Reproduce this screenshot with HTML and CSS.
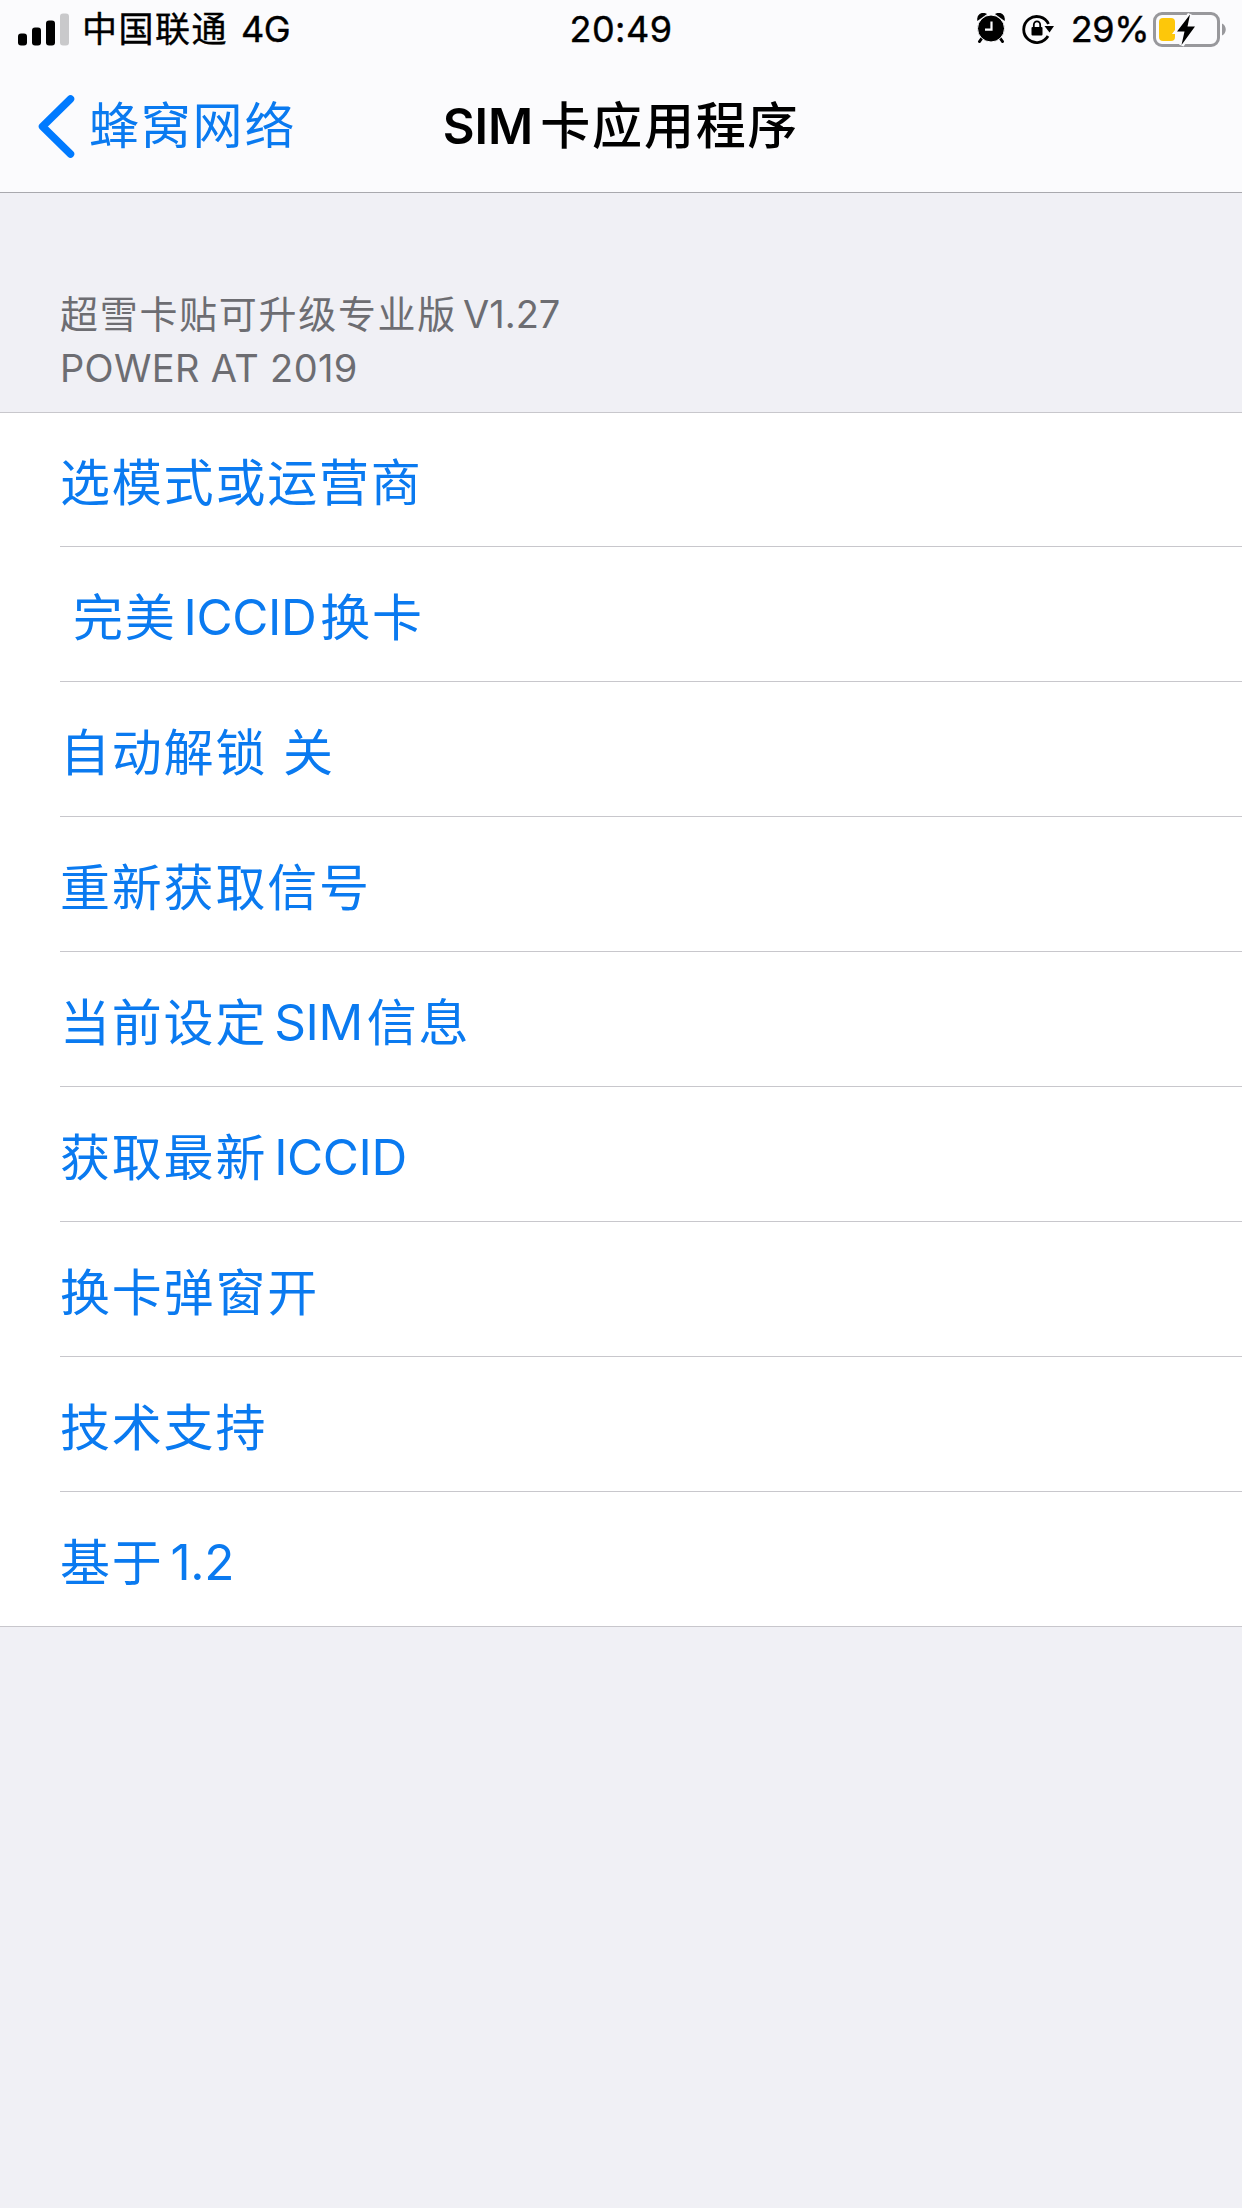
FILE: index.html
```
<!DOCTYPE html>
<html lang="zh-CN">
<head>
  <meta charset="UTF-8">
  <meta name="viewport" content="width=device-width, initial-scale=1.0">
  <title>SIM卡应用程序</title>
  <link rel="stylesheet" href="styles.css">
</head>
<body>

  <header class="top">
    <div class="status-bar">
      <div class="status-left">
        <svg class="signal" width="52" height="33" viewBox="0 0 52 33">
          <rect x="0" y="20.5" width="9" height="12" rx="3"/>
          <rect x="14" y="14.5" width="9" height="18" rx="3"/>
          <rect x="28" y="7.5" width="9" height="25" rx="3"/>
          <rect x="42" y="0.5" width="9" height="32" rx="3" fill="#c9c9cb"/>
        </svg>
        <span class="carrier">中国联通</span>
        <span class="network">4G</span>
      </div>
      <div class="clock">20:49</div>
      <div class="status-right">
        <svg class="alarm" width="28" height="30" viewBox="0 0 28 30">
          <path d="M5 25 L2.5 28.5 M23 25 L25.5 28.5" stroke="#000" stroke-width="3" stroke-linecap="round"/>
          <path d="M1.2 6.2 A5 5 0 0 1 8 1.2 Z M26.8 6.2 A5 5 0 0 0 20 1.2 Z" stroke="#000" stroke-width="2"/>
          <circle cx="14" cy="15.500" r="13.500" stroke="#fbfbfd" stroke-width="1"/>
          <path d="M14.5 8.5 V16.6 H8" fill="none" stroke="#fbfbfd" stroke-width="2.2"/>
        </svg>
        <svg class="lock" width="32" height="30" viewBox="0 0 32 30">
          <path d="M26.5 10 A13 13 0 1 0 26 22" fill="none" stroke="#000" stroke-width="2.8"/>
          <path d="M22.500 12 H32 L27.500 18.5 Z"/>
          <rect x="9.5" y="13" width="11" height="8.5" rx="1"/>
          <path d="M11.8 13.5 V11 A3.2 3.6 0 0 1 18.2 11 V13.5" fill="none" stroke="#000" stroke-width="1.8"/>
        </svg>
        <span class="percent">29%</span>
        <svg class="battery" width="74" height="36" viewBox="0 0 74 36">
          <rect x="1.5" y="2.5" width="64" height="32" rx="7.5" fill="none" stroke="#98989c" stroke-width="3"/>
          <path d="M69 12.5 C74 14.5 74 22.5 69 24.5 Z" fill="#98989c"/>
          <rect x="6" y="7" width="16" height="23" rx="4" fill="#fdc70a"/>
          <path d="M37 3.5 L24 20.5 H31.5 L28.5 34 L42 15.5 H34.5 Z" fill="#000" stroke="#fbfbfd" stroke-width="5" paint-order="stroke"/>
        </svg>
      </div>
    </div>

    <nav class="nav-bar">
      <a class="back">
        <svg width="37" height="63" viewBox="0 0 37 63">
          <path d="M32.5 4 L4.5 31.5 L32.5 59" fill="none" stroke="#007aff" stroke-width="7.5" stroke-linecap="round" stroke-linejoin="round"/>
        </svg>
        <span>蜂窝网络</span>
      </a>
      <h1 class="title"><span class="latin">SIM</span>卡应用程序</h1>
    </nav>
  </header>

  <main>
    <div class="group-header">
      <p>超雪卡贴可升级专业版<span class="latin">V1.27</span></p>
      <p class="sub">POWER AT 2019</p>
    </div>

    <ul class="menu">
      <li><a>选模式或运营商</a></li>
      <li><a class="indent">完美<span class="latin">ICCID</span>换卡</a></li>
      <li><a>自动解锁 关</a></li>
      <li><a>重新获取信号</a></li>
      <li><a>当前设定<span class="latin">SIM</span>信息</a></li>
      <li><a>获取最新<span class="latin">ICCID</span></a></li>
      <li><a>换卡弹窗开</a></li>
      <li><a>技术支持</a></li>
      <li><a>基于<span class="latin">1.2</span></a></li>
    </ul>
  </main>

</body>
</html>
```
FILE: styles.css
```
* {
  box-sizing: border-box;
}

html, body {
  margin: 0;
  padding: 0;
}

body {
  min-height: 2208px;
  background-color: #f0f0f5;
  font-family: Inter, "Noto Sans CJK SC", sans-serif;
  color: #000;
  white-space: nowrap;
}

.top {
  height: 193px;
  background: #fbfbfd;
  border-bottom: 1px solid #a9a9ae;
}

.status-bar {
  display: grid;
  grid-template-columns: 1fr auto 1fr;
  align-items: center;
  height: 58px;
  padding: 0 15px 0 18px;
  font-size: 36px;
  line-height: 58px;
  -webkit-text-stroke: 0.4px #000;
}

.status-left,
.status-right {
  display: flex;
  align-items: center;
}

.status-right {
  justify-content: flex-end;
}

.signal {
  margin-right: 12px;
}

.carrier {
  font-size: 35px;
  letter-spacing: 1.5px;
}

.network {
  margin-left: 13px;
  letter-spacing: -0.5px;
}

.clock {
  margin-right: 3px;
  letter-spacing: 0.5px;
}

.alarm {
  margin: 0 17px 3px 0;
}

.lock {
  margin-right: 17px;
}

.percent {
  margin-right: 4px;
  letter-spacing: -0.5px;
}

.nav-bar {
  display: grid;
  grid-template-columns: 1fr auto 1fr;
  align-items: center;
  height: 136px;
  padding: 0 38px;
}

.back {
  display: flex;
  align-items: center;
  gap: 14px;
  color: #0a7af0;
  font-size: 50px;
  line-height: 72px;
  letter-spacing: 1.8px;
}

.title {
  margin: 0;
  font-size: 50px;
  font-weight: 500;
  line-height: 72px;
  letter-spacing: 1.8px;
}

.title .latin {
  margin-right: 7px;
  font-size: 49px;
  font-weight: 600;
  letter-spacing: 0;
}

.group-header {
  height: 219px;
  padding: 94px 60px 0;
  color: #6d6d72;
  font-size: 38px;
  line-height: 54px;
  letter-spacing: 1.7px;
}

.group-header p {
  margin: 0;
}

.group-header .latin {
  margin-left: 6px;
  letter-spacing: 0;
}

.group-header .sub {
  line-height: 55px;
  letter-spacing: 0.35px;
}

.menu {
  margin: 0;
  padding: 0;
  list-style: none;
  background: #fff;
  border-bottom: 1px solid #c8c7cc;
  box-shadow: inset 0 1px #c8c7cc;
}

.menu li {
  height: 135px;
  padding-left: 60px;
}

.menu li:last-child {
  height: 134px;
}

.menu a {
  display: block;
  height: 100%;
  padding-top: 6px;
  color: #0a7af0;
  font-size: 50px;
  line-height: 130px;
  letter-spacing: 1.8px;
  border-bottom: 1px solid #c8c7cc;
}

.menu li:last-child a {
  border-bottom: none;
}

.menu .indent {
  text-indent: 13px;
}

.menu .latin {
  margin: 0 4px 0 7px;
  font-size: 49.5px;
  line-height: 1;
  letter-spacing: -0.4px;
  vertical-align: 1px;
}
```
